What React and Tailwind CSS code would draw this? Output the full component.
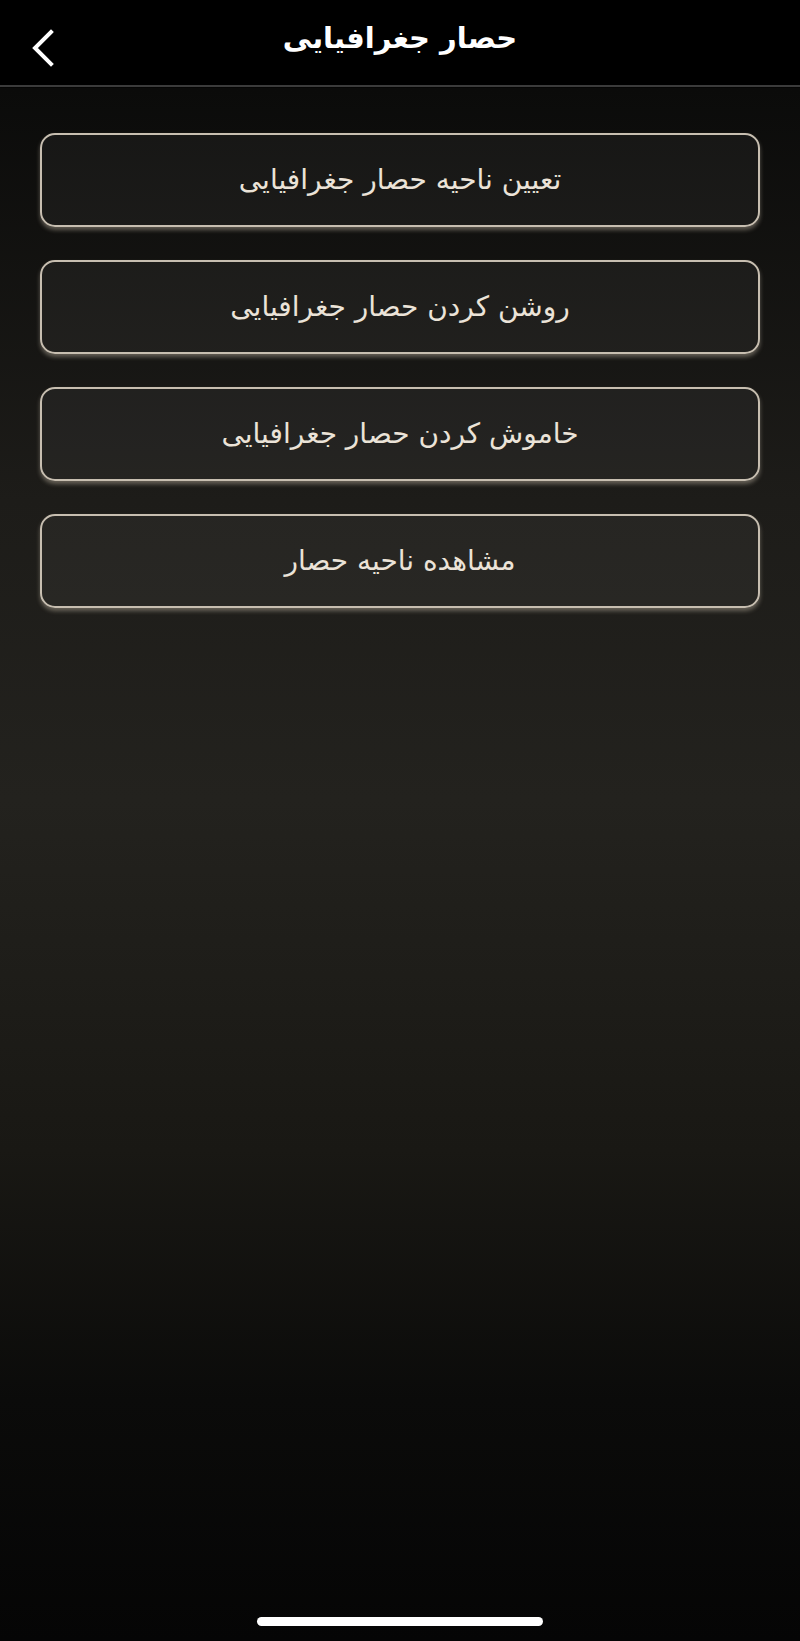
const items = [
  "تعیین ناحیه حصار جغرافیایی",
  "روشن کردن حصار جغرافیایی",
  "خاموش کردن حصار جغرافیایی",
  "مشاهده ناحیه حصار",
]

export default function App() {
  return (
    <div
      className="flex min-h-[1641px] w-full flex-col bg-[linear-gradient(to_bottom,#000_0px,#000_87px,#0b0b0a_88px,#1d1c19_500px,#23221e_800px,#191814_1150px,#0b0b0a_1400px,#050505_1641px)]"
      style={{ fontFamily: '"DejaVu Sans", sans-serif' }}
    >
      {/* Header */}
      <div className="relative flex h-[87px] shrink-0 items-center justify-center border-b-2 border-[#3b3b3b] bg-black">
        <button className="absolute left-[26px] top-[24px] p-1">
          <svg width="28" height="40" viewBox="0 0 28 40" fill="none">
            <path d="M21 4 L5 20 L21 36" stroke="#fff" strokeWidth="4" strokeLinecap="square" />
          </svg>
        </button>
        <h1 dir="rtl" className="-mt-[8px] text-[29px] font-bold text-white">
          حصار جغرافیایی
        </h1>
      </div>

      {/* Options */}
      <div className="flex flex-col gap-[33px] px-10 pt-[46px]">
        {items.map((label) => (
          <button
            key={label}
            dir="rtl"
            className="flex h-[94px] items-center justify-center rounded-[15px] border-2 border-[#c7beb0] bg-white/[0.045] text-[28px] text-[#ebe3d8] shadow-[0_3px_4px_rgba(214,202,182,0.4)]"
          >
            {label}
          </button>
        ))}
      </div>

      <div className="flex-1" />

      {/* Home indicator */}
      <div className="flex justify-center pb-[15px]">
        <div className="h-[9px] w-[286px] rounded-full bg-white" />
      </div>
    </div>
  )
}
